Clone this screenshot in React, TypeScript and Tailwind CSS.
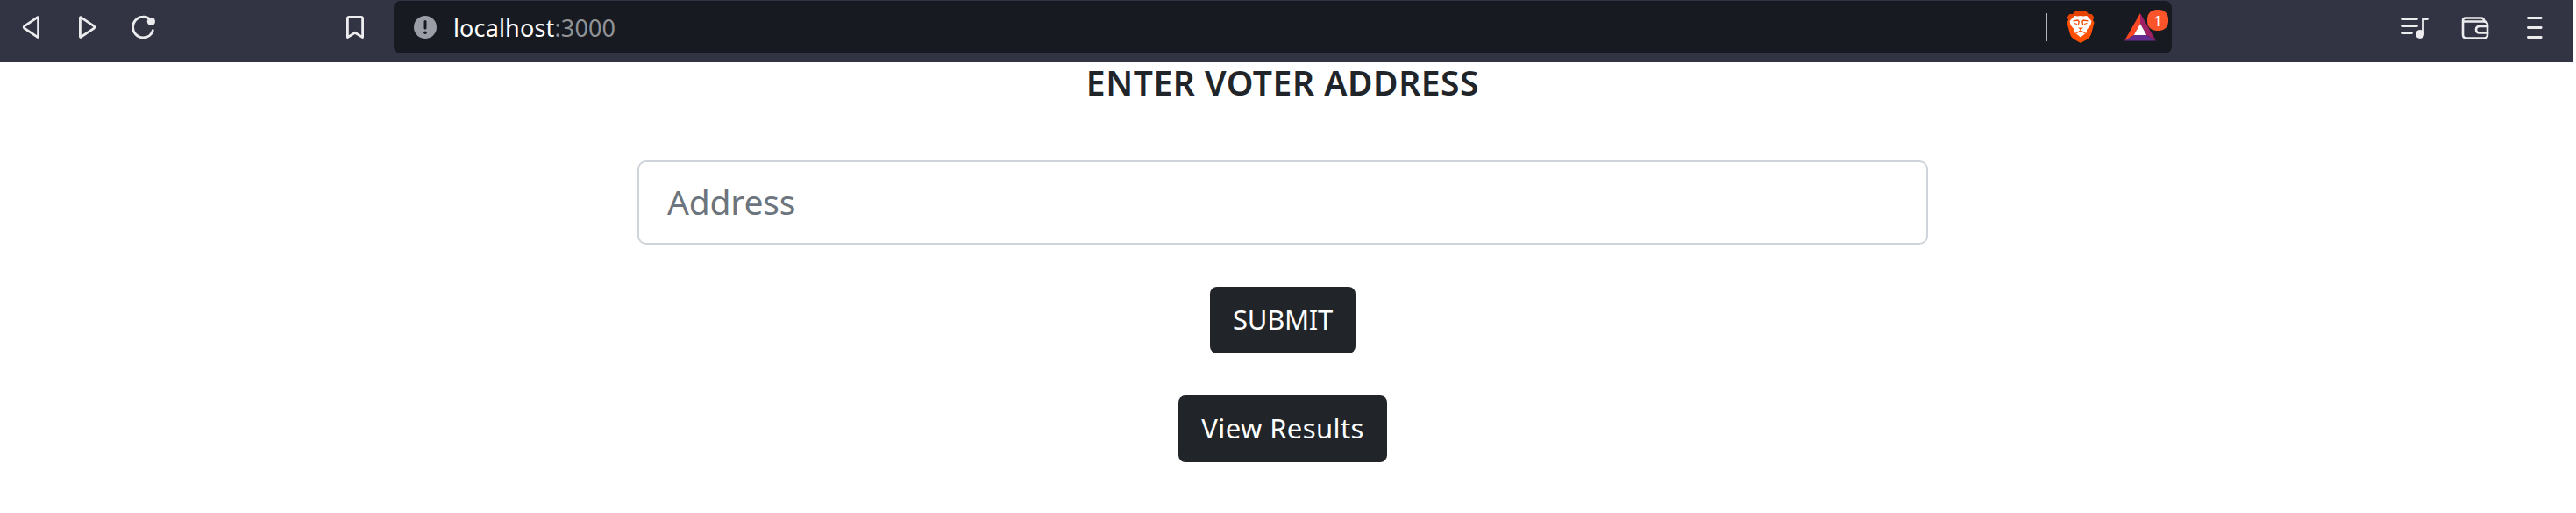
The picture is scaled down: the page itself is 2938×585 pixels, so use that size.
import React from "react";

const stroke = {
  fill: "none",
  stroke: "#ececef",
  strokeWidth: 2.8,
  strokeLinecap: "round" as const,
  strokeLinejoin: "round" as const,
};

function BackIcon() {
  return (
    <svg className="h-[30px] w-[24px]" viewBox="0 0 24 30">
      <path {...stroke} d="M18.600 3.800 Q19.600 3.200 19.600 4.400 V25.600 Q19.600 26.800 18.600 26.200 L4 16.400 Q2.400 15 4 13.600 Z" />
    </svg>
  );
}

function ForwardIcon() {
  return (
    <svg className="h-[30px] w-[24px] -scale-x-100" viewBox="0 0 24 30">
      <path {...stroke} d="M18.600 3.800 Q19.600 3.200 19.600 4.400 V25.600 Q19.600 26.800 18.600 26.200 L4 16.400 Q2.400 15 4 13.600 Z" />
    </svg>
  );
}

function ReloadIcon() {
  return (
    <svg className="h-[30px] w-[30px]" viewBox="0 0 30 30">
      <path {...stroke} d="M22 5.2 C19.5 3.3 16.8 2.9 15 3.2 C8.500 3.200 3.500 8.500 3.500 15 C3.500 21.500 8.500 26.800 15 26.800 C20.700 26.800 25 23.500 26.300 18.600" />
      <circle cx="24.4" cy="8.500" r="4.600" fill="#ececef" />
    </svg>
  );
}

function BookmarkIcon() {
  return (
    <svg className="h-[30px] w-[24px]" viewBox="0 0 24 30">
      <path {...stroke} d="M3.400 5.200 Q3.400 3.400 5.200 3.400 H18.800 Q20.600 3.400 20.600 5.200 V26.600 L12 21.200 L3.400 26.600 Z" />
    </svg>
  );
}

function InfoIcon() {
  return (
    <svg className="h-[26px] w-[26px]" viewBox="0 0 26 26">
      <circle cx="13" cy="13" r="13" fill="#9b9ea7" />
      <path d="M13 6.500 V14" stroke="#181a21" strokeWidth="3" strokeLinecap="round" />
      <circle cx="13" cy="19.300" r="1.800" fill="#181a21" />
    </svg>
  );
}

function LionIcon() {
  return (
    <svg className="h-[36px] w-[32px]" viewBox="0 0 32 36">
      <path d="M10 0 H22 L25 3 L28.500 3 L31 6.500 L30 9.500 L31.500 13 L28 26 Q27 29.500 24 31.500 L16 36 L8 31.500 Q5 29.500 4 26 L.500 13 L2 9.500 L1 6.500 L3.500 3 L7 3 Z" fill="#ff5000" />
      <path d="M10 0 H22 L25 3 L28.500 3 L31 6.500 L30 9.500 L22 5 H10 L2 9.500 L1 6.500 L3.500 3 L7 3 Z" fill="#e64200" />
      <path d="M9 5 L13 5.600 L16 5 L19 5.600 L23 5 L28.500 11 L27.500 15.500 L23 21 L23 24 L21 25.500 L16 29.500 L11 25.500 L9 24 L9 21 L4.500 15.500 L3.500 11 Z" fill="#fff" />
      <path d="M7.500 10.800 L12.800 10 L14.200 11.500 L13.300 15.500 M24.500 10.800 L19.200 10 L17.800 11.500 L18.700 15.500 M8.500 13.500 L12 14.500 M23.500 13.500 L20 14.500" fill="none" stroke="#f04800" strokeWidth="1.300" />
      <path d="M13 18.500 H19 L16 21 Z" fill="#ff5000" />
      <path d="M10.500 25 L16 22 L21.500 25 M16 20 V22.500" fill="none" stroke="#ff5000" strokeWidth="1.400" />
    </svg>
  );
}

function RewardsIcon() {
  return (
    <svg className="h-[32px] w-[36px]" viewBox="0 0 36 32">
      <path d="M18 0 L0 31.500 L11 25 L18 12 Z" fill="#ff4724" />
      <path d="M18 0 L36 31.500 L25 25 L18 12 Z" fill="#9e1f63" />
      <path d="M0 31.500 H36 L25 25 H11 Z" fill="#662d91" />
      <path d="M18 12 L25.200 25 H10.800 Z" fill="#fff" />
    </svg>
  );
}

function PlaylistIcon() {
  return (
    <svg className="h-[26px] w-[34px]" viewBox="0 0 34 26">
      <path {...stroke} d="M2.500 3.500 H19.500 M2.500 11.500 H19.500 M2.500 19.500 H13.500 M26.500 20 V3.500 H31.500" />
      <circle cx="23" cy="21" r="5" fill="#ececef" />
    </svg>
  );
}

function WalletIcon() {
  return (
    <svg className="h-[28px] w-[34px]" viewBox="0 0 34 28">
      <g {...stroke} strokeWidth="2.600">
        <path d="M3 6.500 H26.500 Q31 6.500 31 10.500 V21.500 Q31 25.500 27 25.500 H7 Q3 25.500 3 21.500 V5.500 Q3 2.500 6 2.500 H24 Q26.500 2.500 27.500 6" />
        <path d="M31 12 H22 Q18 12 18 15.800 Q18 19.500 22 19.500 H31" />
      </g>
    </svg>
  );
}

function MenuIcon() {
  return (
    <svg className="h-[28px] w-[20px]" viewBox="0 0 20 28">
      <path {...stroke} d="M2.400 3.500 H17.200 M2.400 14.500 H17.200 M2.400 25.500 H17.200" />
    </svg>
  );
}

function AddressBar() {
  return (
    <div className="mt-px flex h-[60px] w-[2028px] items-center rounded-lg bg-[#181a21] pl-[23px]">
      <InfoIcon />
      <div className="ml-[19px] text-[27px] leading-none tracking-[0.15px] text-white">
        localhost<span className="text-[#919295]">:3000</span>
      </div>
      <div className="ml-auto h-8 w-[2px] bg-[#b5b6b8]" />
      <div className="ml-[22px]">
        <LionIcon />
      </div>
      <div className="relative ml-[34px] mr-[18px]">
        <RewardsIcon />
        <span className="absolute -top-[4px] left-[26px] flex h-6 w-6 items-center justify-center rounded-[10px] bg-[#fb542b] text-[17px] leading-none text-white">
          1
        </span>
      </div>
    </div>
  );
}

export default function App() {
  return (
    <div className="h-[585px] w-[2938px] overflow-hidden bg-white font-['Noto_Sans',sans-serif]">
      <header className="flex h-[71px] w-[2935px] items-start bg-[#323443]">
        <div className="flex h-[62px] w-[449px] shrink-0 items-center pl-[24px]">
          <BackIcon />
          <div className="ml-[39px]">
            <ForwardIcon />
          </div>
          <div className="ml-[37px]">
            <ReloadIcon />
          </div>
          <div className="ml-auto mr-[32px]">
            <BookmarkIcon />
          </div>
        </div>
        <AddressBar />
        <div className="ml-auto mr-[34px] flex h-[62px] items-center">
          <PlaylistIcon />
          <div className="ml-[35px] mt-px">
            <WalletIcon />
          </div>
          <div className="ml-[41px]">
            <MenuIcon />
          </div>
        </div>
      </header>
      <main className="flex w-[2926px] flex-col items-center">
        <h1 className="h-[48px] whitespace-nowrap text-[39px] leading-[46px] font-semibold tracking-[0.55px] text-[#212529]">
          ENTER VOTER ADDRESS
        </h1>
        <input
          placeholder="Address"
          className="mt-[64px] h-[96px] w-[1472px] rounded-[10px] border-2 border-[#ced4da] bg-white px-[32px] pb-[3px] text-[39px] tracking-[-0.2px] outline-none placeholder:text-[#6c757d]"
        />
        <button className="mt-[48px] h-[76px] w-[166px] rounded-lg bg-[#212529] pb-[2px] text-[31px] tracking-[-0.3px] text-white">
          SUBMIT
        </button>
        <button className="mt-[48px] h-[76px] w-[238px] rounded-lg bg-[#212529] pb-[2px] text-[31px] tracking-[0.4px] text-white">
          View Results
        </button>
      </main>
    </div>
  );
}
